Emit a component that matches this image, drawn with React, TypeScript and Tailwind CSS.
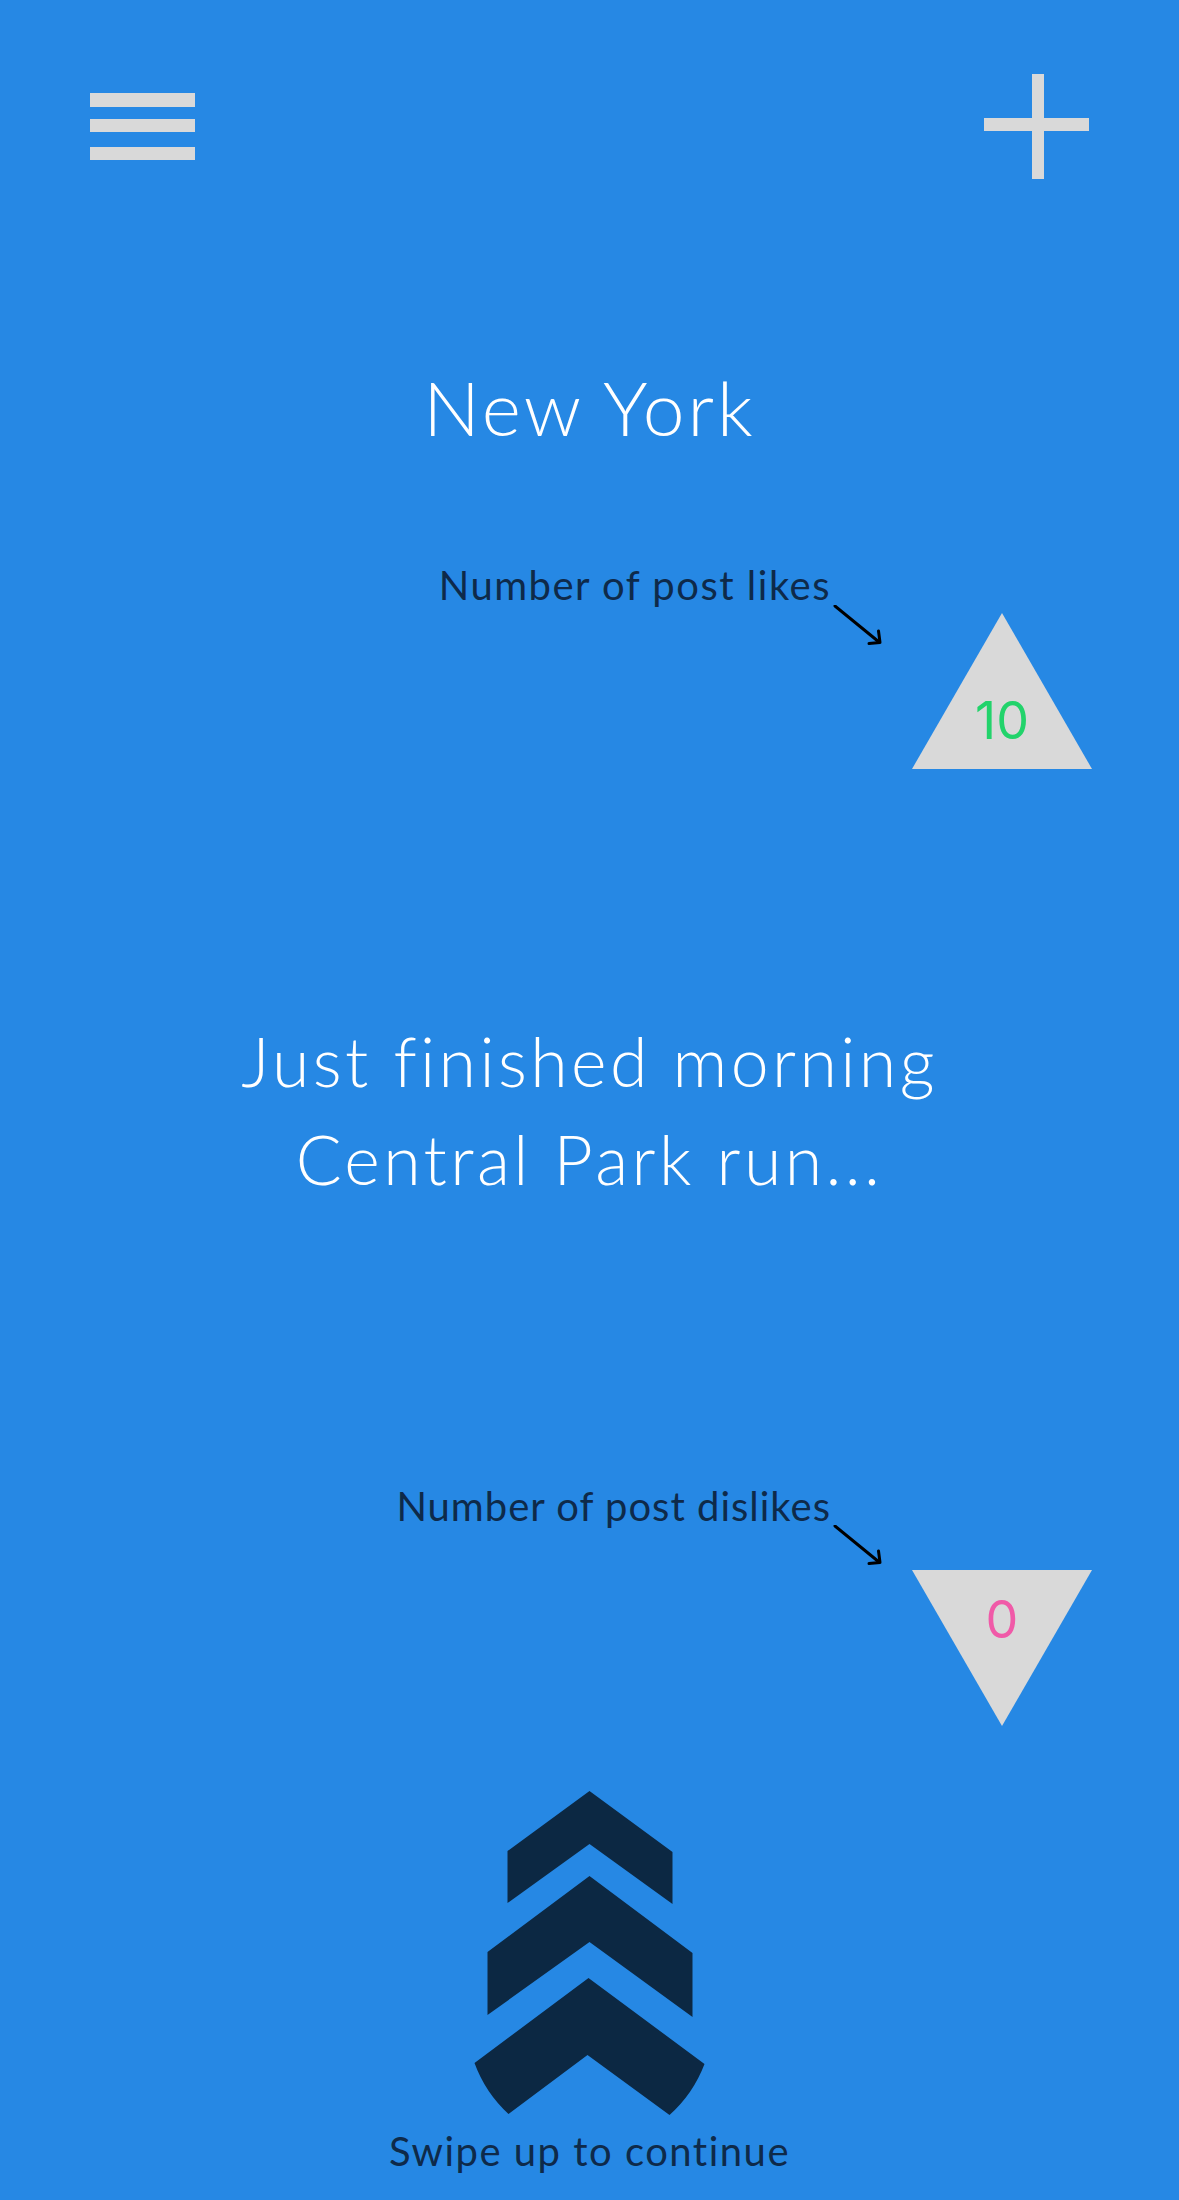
import React from "react";

const font = { fontFamily: "Lato, 'Noto Sans', sans-serif" };

const Arrow = () => (
    <svg width="81" height="42" viewBox="0 0 81 42" className="shrink-0">
        <line x1="4" y1="1" x2="48" y2="37" stroke="#000" strokeWidth="3" strokeLinecap="round" />
        <polyline points="38,38.5 49,37.5 47.5,26" fill="none" stroke="#000" strokeWidth="3" strokeLinecap="round" strokeLinejoin="round" />
    </svg>
);

const Triangle = ({ up, value, color }: { up: boolean; value: string; color: string }) => (
    <div className="relative w-[180px] h-[156px] shrink-0">
        <svg width="180" height="156" viewBox="0 0 180 156" className="absolute inset-0">
            {up ? (
                <polygon points="90,0 180,156 0,156" fill="#d9d9d9" />
            ) : (
                <polygon points="0,0 180,0 90,156" fill="#d9d9d9" />
            )}
        </svg>
        <div
            className={`relative flex justify-center text-[52px] leading-none ${color} ${up ? "pt-[82px]" : "pt-[24px]"}`}
            style={{ fontFamily: "Inter, Roboto, sans-serif" }}
        >
            {value}
        </div>
    </div>
);

const App = () => {
    return (
        <div className="w-[1179px] h-[2200px] bg-[#2688e4] flex flex-col overflow-hidden" style={font}>
            {/* HEADER */}
            <div className="flex justify-between items-start px-[90px] pt-[74px]">
                <div className="flex flex-col w-[105px] mt-[19px]">
                    <div className="h-[14px] bg-[#d9d9d9]" />
                    <div className="h-[13px] bg-[#d9d9d9] mt-[12px]" />
                    <div className="h-[13px] bg-[#d9d9d9] mt-[15px]" />
                </div>
                <div className="relative w-[105px] h-[105px]">
                    <div className="absolute left-[48px] top-0 w-[12px] h-[105px] bg-[#d9d9d9]" />
                    <div className="absolute left-0 top-[44px] w-[105px] h-[13px] bg-[#d9d9d9]" />
                </div>
            </div>

            {/* CITY */}
            <div className="mt-[191px] text-center text-white text-[75px] leading-none font-light tracking-[3px]">New York</div>

            {/* LIKES */}
            <div className="mt-[120px] flex justify-end items-start pr-[87px]">
                <div className="text-[40px] leading-none text-[#0e2a4a] tracking-[1.5px]">Number of post likes</div>
                <div className="mt-[40px]"><Arrow /></div>
                <div className="mt-[48px]"><Triangle up value="10" color="text-[#22d36b]" /></div>
            </div>

            {/* POST */}
            <div className="mt-[243px] text-center text-white text-[68px] leading-[98px] font-light tracking-[3.4px]">
                <div>Just finished morning</div>
                <div>Central Park run...</div>
            </div>

            {/* DISLIKES */}
            <div className="mt-[278px] flex justify-end items-start pr-[87px]">
                <div className="text-[40px] leading-none text-[#0e2a4a] tracking-[1px]">Number of post dislikes</div>
                <div className="mt-[39px]"><Arrow /></div>
                <div className="mt-[84px]"><Triangle up={false} value="0" color="text-[#f05aa8]" /></div>
            </div>

            {/* SWIPE */}
            <div className="mt-[63px] flex justify-center">
                <svg width="240" height="330" viewBox="0 0 240 330">
                    <g fill="#0c2843">
                        <polygon points="119.5,2 202.5,63 202.5,115 119.5,55 37.5,114 37.5,62" />
                        <polygon points="119.5,87 222.5,164 222.5,228 119.5,153 17.5,226 17.5,163" />
                        <path d="M118.5 189 L234.5 275 A130 130 0 0 1 199.5 326 L117.5 266 L38.5 325 A130 130 0 0 1 4.5 274 Z" />
                    </g>
                </svg>
            </div>
            <div className="mt-[12px] text-center text-[40px] leading-none text-[#0e2a4a] tracking-[1.5px]">Swipe up to continue</div>
        </div>
    );
};

export default App;
